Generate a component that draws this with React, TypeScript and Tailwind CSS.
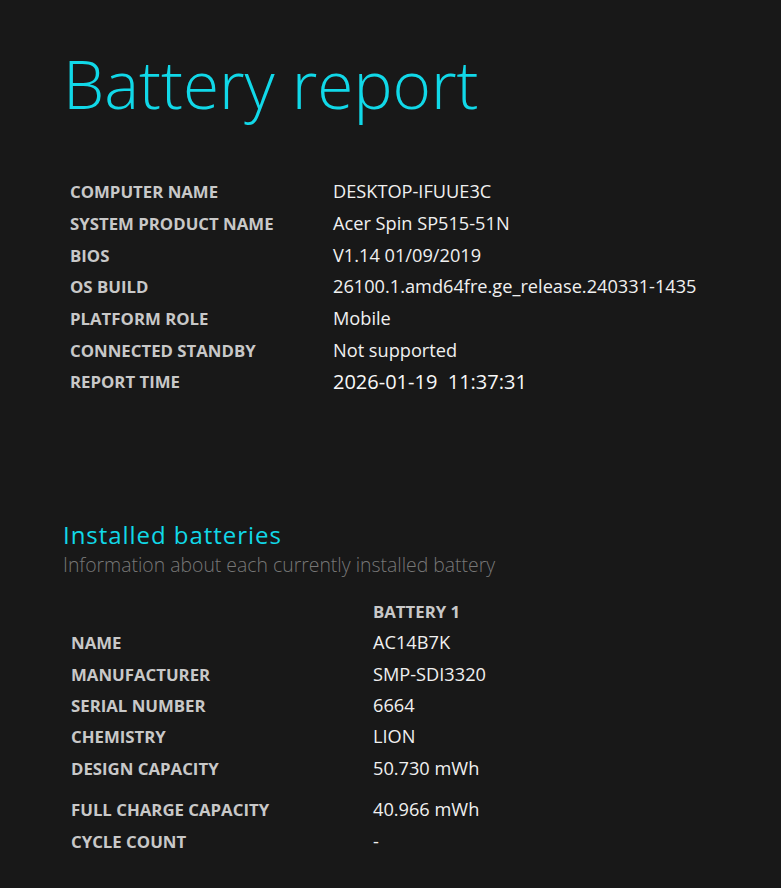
import React from "react";

const sys: [string, string][] = [
  ["Computer name", "DESKTOP-IFUUE3C"],
  ["System product name", "Acer Spin SP515-51N"],
  ["BIOS", "V1.14 01/09/2019"],
  ["OS build", "26100.1.amd64fre.ge_release.240331-1435"],
  ["Platform role", "Mobile"],
  ["Connected standby", "Not supported"],
];

const bat: [string, string, string][] = [
  ["Name", "AC14B7K", "h-[31.4px]"],
  ["Manufacturer", "SMP-SDI3320", "h-[31.4px]"],
  ["Serial number", "6664", "h-[31.4px]"],
  ["Chemistry", "LION", "h-[31.4px]"],
  ["Design capacity", "50.730 mWh", "h-[31.4px]"],
  ["Full charge capacity", "40.966 mWh", "h-[31.4px] mt-[10px]"],
  ["Cycle count", "-", "h-[31.4px]"],
];

export default function App() {
  return (
    <div
      className="min-h-[888px] w-full bg-[#181818] pl-[63px] pt-[34px]"
      style={{ fontFamily: '"Open Sans", "Noto Sans", sans-serif' }}
    >
      <h1 className="text-[65.7px] leading-[100px] font-light text-[#11D8E8]">Battery report</h1>
      <div className="mt-[42px] pl-[7px]">
        {sys.map(([k, v]) => (
          <div key={k} className="flex h-[31.7px] items-center">
            <div className="w-[263px] text-[16.8px] font-bold uppercase text-[#c8c8c8]">{k}</div>
            <div className="text-[18.2px] text-[#f0f0f0]">{v}</div>
          </div>
        ))}
        <div className="flex h-[31.7px] items-center">
          <div className="w-[263px] text-[16.8px] font-bold uppercase text-[#c8c8c8]">Report time</div>
          <div className="text-[20px] font-medium text-[#f8f8f8]">2026-01-19&nbsp;&nbsp;11:37:31</div>
        </div>
      </div>
      <h2 className="mt-[121px] text-[24px] leading-[32px] text-[#11D8E8] tracking-[0.04em]">Installed batteries</h2>
      <div className="text-[19.4px] leading-[27px] font-light text-[#777777]">Information about each currently installed battery</div>
      <div className="mt-[18px] pl-[8px]">
        <div className="flex h-[31.4px] items-center">
          <div className="w-[302px]" />
          <div className="text-[16.8px] font-bold uppercase text-[#c8c8c8]">Battery 1</div>
        </div>
        {bat.map(([k, v, c]) => (
          <div key={k} className={`flex items-center ${c}`}>
            <div className="w-[302px] text-[16.8px] font-bold uppercase text-[#c8c8c8]">{k}</div>
            <div className="text-[18.2px] text-[#f0f0f0]">{v}</div>
          </div>
        ))}
      </div>
    </div>
  );
}
